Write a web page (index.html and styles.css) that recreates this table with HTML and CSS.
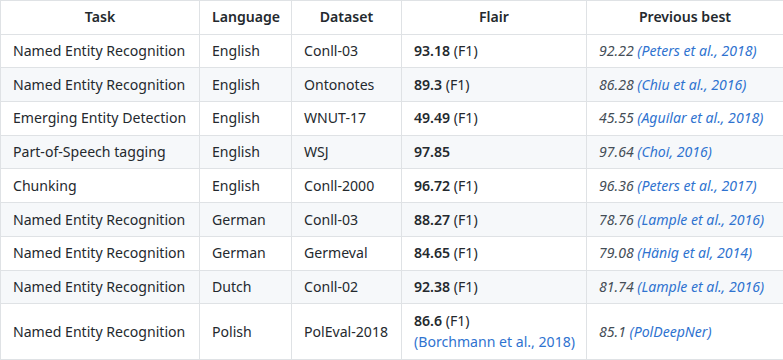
FILE: index.html
```html
<!DOCTYPE html>
<html lang="en">
<head>
    <meta charset="UTF-8">
    <title>Flair results</title>
    <link rel="stylesheet" href="styles.css">
</head>
<body>
    <table class="results">
        <colgroup>
            <col class="c_task">
            <col class="c_lang">
            <col class="c_data">
            <col class="c_flair">
            <col class="c_prev">
        </colgroup>
        <thead>
            <tr>
                <th>Task</th>
                <th>Language</th>
                <th>Dataset</th>
                <th>Flair</th>
                <th>Previous best</th>
            </tr>
        </thead>
        <tbody>
            <tr>
                <td>Named Entity Recognition</td>
                <td>English</td>
                <td>Conll-03</td>
                <td><strong>93.18</strong> (F1)</td>
                <td><em>92.22 <a href="#">(Peters et al., 2018)</a></em></td>
            </tr>
            <tr>
                <td>Named Entity Recognition</td>
                <td>English</td>
                <td>Ontonotes</td>
                <td><strong>89.3</strong> (F1)</td>
                <td><em>86.28 <a href="#">(Chiu et al., 2016)</a></em></td>
            </tr>
            <tr>
                <td>Emerging Entity Detection</td>
                <td>English</td>
                <td>WNUT-17</td>
                <td><strong>49.49</strong> (F1)</td>
                <td><em>45.55 <a href="#">(Aguilar et al., 2018)</a></em></td>
            </tr>
            <tr>
                <td>Part-of-Speech tagging</td>
                <td>English</td>
                <td>WSJ</td>
                <td><strong>97.85</strong></td>
                <td><em>97.64 <a href="#">(Choi, 2016)</a></em></td>
            </tr>
            <tr>
                <td>Chunking</td>
                <td>English</td>
                <td>Conll-2000</td>
                <td><strong>96.72</strong> (F1)</td>
                <td><em>96.36 <a href="#">(Peters et al., 2017)</a></em></td>
            </tr>
            <tr>
                <td>Named Entity Recognition</td>
                <td>German</td>
                <td>Conll-03</td>
                <td><strong>88.27</strong> (F1)</td>
                <td><em>78.76 <a href="#">(Lample et al., 2016)</a></em></td>
            </tr>
            <tr>
                <td>Named Entity Recognition</td>
                <td>German</td>
                <td>Germeval</td>
                <td><strong>84.65</strong> (F1)</td>
                <td><em>79.08 <a href="#">(Hänig et al, 2014)</a></em></td>
            </tr>
            <tr>
                <td>Named Entity Recognition</td>
                <td>Dutch</td>
                <td>Conll-02</td>
                <td><strong>92.38</strong> (F1)</td>
                <td><em>81.74 <a href="#">(Lample et al., 2016)</a></em></td>
            </tr>
            <tr>
                <td>Named Entity Recognition</td>
                <td>Polish</td>
                <td>PolEval-2018</td>
                <td><strong>86.6</strong> (F1)<br><a href="#">(Borchmann et al., 2018)</a></td>
                <td><em>85.1 <a href="#">(PolDeepNer)</a></em></td>
            </tr>
        </tbody>
    </table>
</body>
</html>
```
FILE: styles.css
```css
* {
    padding: 0;
    margin: 0;
    box-sizing: border-box;
}
body {
    font-family: 'Noto Sans', 'Open Sans', sans-serif;
    font-size: 14.1px;
    line-height: 21.9px;
    color: #24292e;
    background: #fff;
}
a {
    color: #2f73d0;
    text-decoration: none;
}
.results {
    width: 783px;
    table-layout: fixed;
    border-collapse: collapse;
    border-spacing: 0;
}
.c_task { width: 199px; }
.c_lang { width: 92px; }
.c_data { width: 110px; }
.c_flair { width: 185px; }
.c_prev { width: 197px; }
.results th, .results td {
    padding: 5.4px 12px;
    border: 1px solid #dfe2e5;
    white-space: nowrap;
}
.results th {
    font-weight: 600;
    text-align: center;
}
.results td {
    text-align: left;
}
.results tbody tr:nth-child(odd) {
    background: #fff;
}
.results tbody tr:nth-child(even) {
    background: #f6f8fa;
}
.results strong {
    font-weight: 600;
}
.results em {
    color: #444d56;
}
```
